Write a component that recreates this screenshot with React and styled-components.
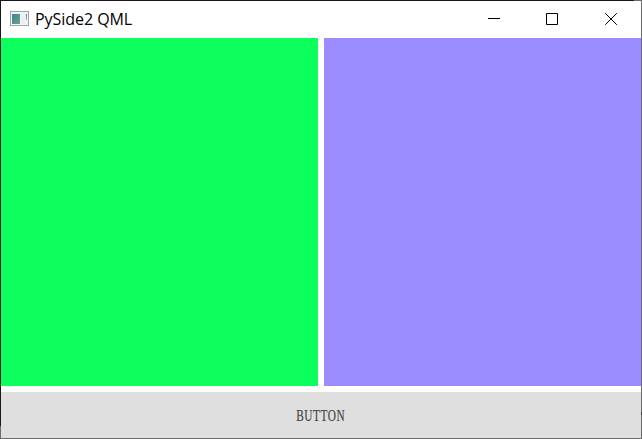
import React from "react";
import styled, { createGlobalStyle } from "styled-components";

const GlobalStyle = createGlobalStyle`
  * { box-sizing: border-box; }
  body { margin: 0; overflow: hidden; }
`;

const Window = styled.div`
  width: 642px;
  height: 439px;
  display: grid;
  grid-template-rows: 37px 348px 52px;
  background: #fff;
  border: 1px solid #6c6c6c;
  border-top-color: #1a171b;
  position: relative;
`;

const EdgeShade = styled.div`
  position: absolute;
  background: #1a171b;
  left: -1px;
  top: -1px;
  width: 1px;
  height: 426px;
`;

const TopCorner = styled.div`
  position: absolute;
  background: #6c6c6c;
  right: -1px;
  top: -1px;
  width: 8px;
  height: 1px;
`;

const EdgeMark = styled.div`
  position: absolute;
  background: #39363a;
  right: -1px;
  top: 411px;
  width: 1px;
  height: 3px;
`;

const TitleBar = styled.header`
  display: flex;
  align-items: center;
  padding: 0 1px 1px 9px;
`;

const Title = styled.h1`
  margin: 0 auto 0 6px;
  font: 400 16px/22px "Open Sans", sans-serif;
  letter-spacing: -0.05px;
  color: #000;
  white-space: nowrap;
`;

const Caption = styled.button`
  width: 58.5px;
  height: 36px;
  padding: 0;
  border: 0;
  background: none;
  display: grid;
  place-items: center;
`;

const Content = styled.main`
  display: grid;
  grid-template-columns: 317px 317px;
  column-gap: 6px;
`;

const Panel = styled.section`
  background: ${(p) => p.$color};
`;

const WideButton = styled.button`
  margin-top: 6px;
  height: 46px;
  padding: 1px 0 0;
  border: 0;
  background: #dfdfdf;
  display: grid;
  place-items: center;
`;

const Label = styled.span`
  font: 400 17px/20px "Liberation Serif", serif;
  letter-spacing: 0.8px;
  color: #444;
  -webkit-text-stroke: 0.2px #444;
  transform: scaleX(0.665);
  white-space: nowrap;
`;

const AppIcon = () => (
  <svg width="19" height="16" viewBox="0 0 19 16" shapeRendering="crispEdges">
    <defs>
      <linearGradient id="screen" x1="0" y1="0" x2="1" y2="1">
        <stop offset="0" stopColor="#477da0" />
        <stop offset="1" stopColor="#62ab7d" />
      </linearGradient>
      <linearGradient id="strip" x1="0" y1="0" x2="0" y2="1">
        <stop offset="0" stopColor="#4e83b5" />
        <stop offset="1" stopColor="#82c295" />
      </linearGradient>
    </defs>
    <rect x="0.5" y="0.5" width="18" height="14" fill="#f4f5f6" stroke="#a0a5a9" />
    <rect x="2" y="3" width="8" height="10" fill="url(#screen)" />
    <rect x="11" y="3" width="4" height="10" fill="#eceff1" />
    <rect x="16" y="3" width="1" height="6" fill="url(#strip)" />
  </svg>
);

const Glyph = ({ d }) => (
  <svg width="12" height="12" viewBox="0 0 12 12" fill="none" stroke="#000">
    <path d={d} />
  </svg>
);

export default function App() {
  return (
    <>
      <GlobalStyle />
      <Window>
        <TitleBar>
          <AppIcon />
          <Title>PySide2 QML</Title>
          <Caption aria-label="Minimize"><Glyph d="M0 5.5H12" /></Caption>
          <Caption aria-label="Maximize"><Glyph d="M.5 .5H11.5V11.5H.5Z" /></Caption>
          <Caption aria-label="Close"><Glyph d="M.2 .2L11.8 11.8M11.8 .2L.2 11.8" /></Caption>
        </TitleBar>
        <Content>
          <Panel $color="#0cff5c" />
          <Panel $color="#9b8cff" />
        </Content>
        <WideButton><Label>BUTTON</Label></WideButton>
        <EdgeShade />
        <TopCorner />
        <EdgeMark />
      </Window>
    </>
  );
}
